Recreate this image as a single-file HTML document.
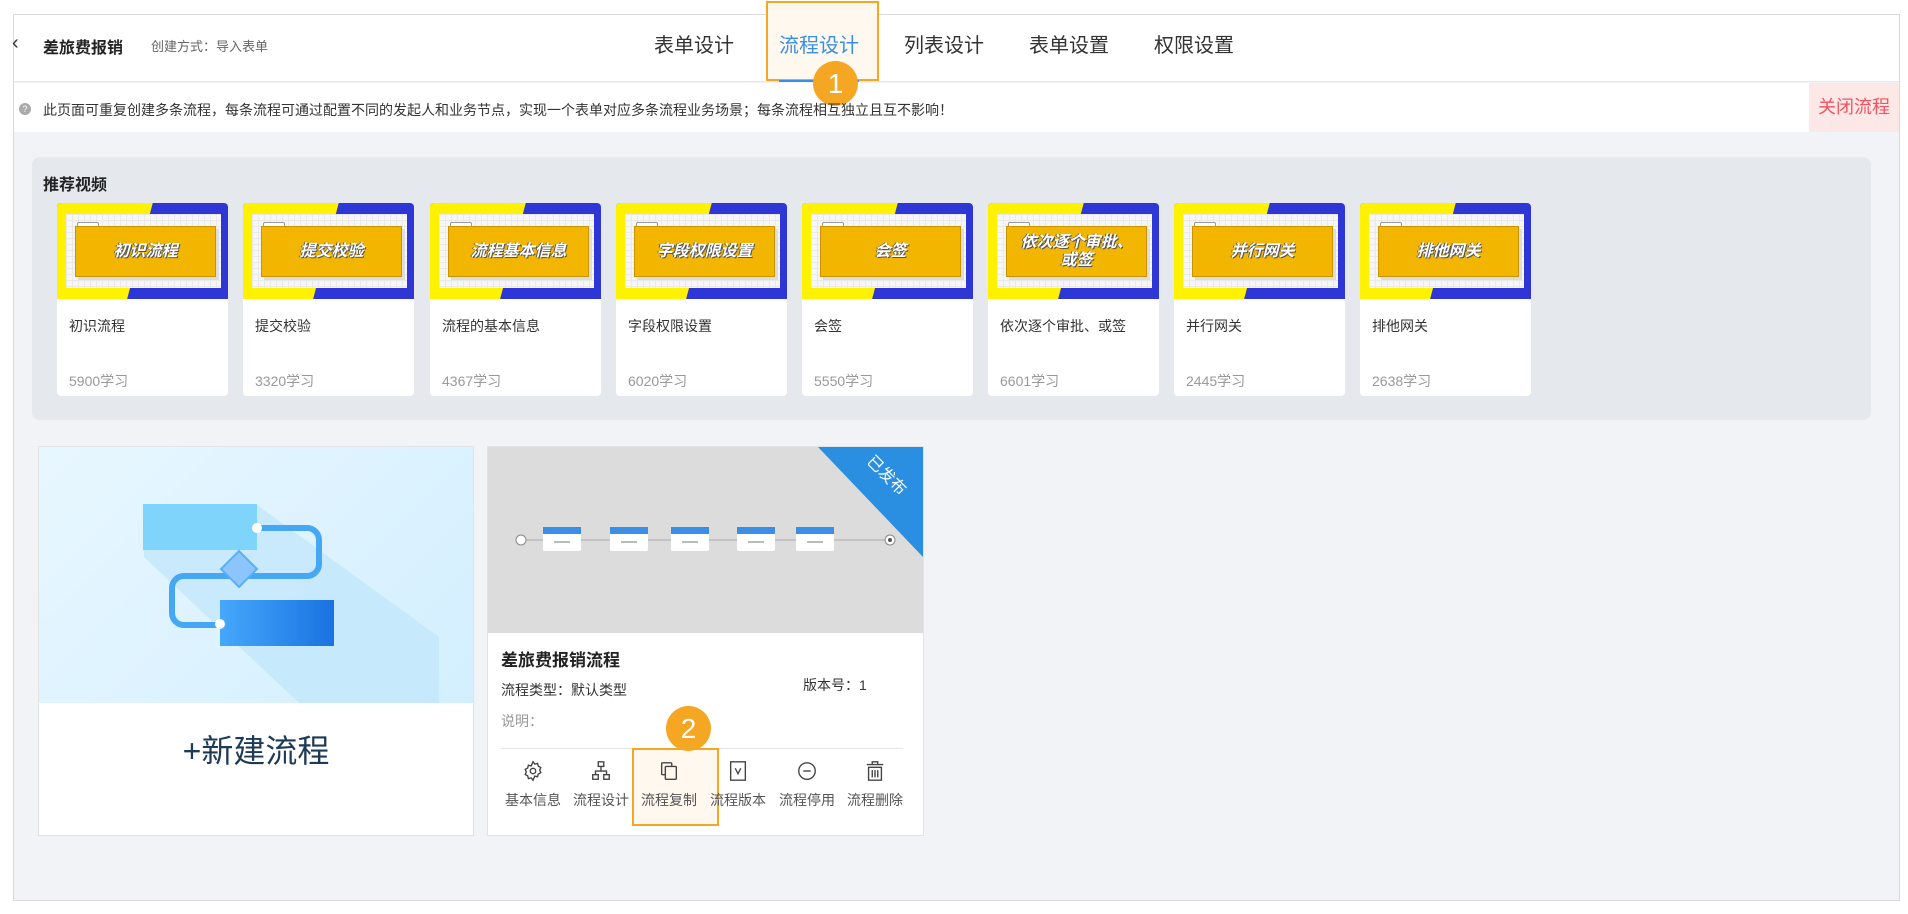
<!DOCTYPE html>
<html><head><meta charset="utf-8">
<style>
*{box-sizing:border-box;margin:0;padding:0}
body{width:1908px;height:914px;background:#fff;font-family:"Liberation Sans","Noto Sans CJK SC",sans-serif;position:relative;overflow:hidden;color:#333}
.abs{position:absolute}
.frame{left:13px;top:14px;width:1887px;height:887px;border:1px solid #d9d9d9;background:#f2f3f6}
.header{left:14px;top:15px;width:1885px;height:67px;background:#fff;border-bottom:1px solid #e8e8e8}
.notice{left:14px;top:83px;width:1885px;height:49px;background:#fff}
.tab{top:29px;font-size:20px;color:#333}
.vc{position:absolute;top:203px;width:171px;height:193px;background:#fff;border-radius:4px;overflow:hidden}
.th{position:relative;height:96px;background:#2f36d6;overflow:hidden}
.th .y{position:absolute;left:0;top:0;width:100%;height:100%;background:#fff200;clip-path:polygon(0 0,56% 0,41% 100%,0 100%)}
.th .w{position:absolute;left:9px;top:11px;right:7px;bottom:11px;background:#f6f6f6;background-image:linear-gradient(#e9e9e9 1px,transparent 1px),linear-gradient(90deg,#e9e9e9 1px,transparent 1px);background-size:6px 6px}
.th .o{position:absolute;left:18px;top:23px;right:12px;bottom:22px;background:#f2b600;border:1px solid #c99400;box-shadow:3px 3px 0 #ddd;display:flex;align-items:center;justify-content:center;color:#fff;font-weight:bold;font-style:italic;font-size:16px;text-shadow:1px 1px 0 #555,-1px 0 0 #555;text-align:center;line-height:18px}
.th .tg{position:absolute;left:20px;top:19px;width:22px;height:6px;background:#fff;border:1px solid #999;border-radius:2px}
.vt{position:absolute;left:12px;top:113px;font-size:14px;color:#333}
.vn{position:absolute;left:12px;top:168px;font-size:14px;color:#999}
.act{position:absolute;top:760px;width:68px;text-align:center;font-size:14px;color:#555}
.act svg{display:block;margin:0 auto 8px;width:22px;height:22px}
</style></head><body>
<div class="abs frame"></div>
<div class="abs header"></div>
<div class="abs" style="left:12px;top:32px;font-size:20px;color:#333">&#8249;</div>
<div class="abs" style="left:43px;top:34px;font-size:16px;font-weight:bold;color:#222">差旅费报销</div>
<div class="abs" style="left:151px;top:36px;font-size:13px;color:#666">创建方式：导入表单</div>
<div class="abs" style="left:766px;top:1px;width:113px;height:80px;background:#fff8ee;border:2px solid #f5a623"></div>
<div class="abs tab" style="left:654px">表单设计</div>
<div class="abs tab" style="left:779px;color:#3a8ee6">流程设计</div>
<div class="abs" style="left:779px;top:80px;width:80px;height:2px;background:#3a8ee6"></div>
<div class="abs tab" style="left:904px">列表设计</div>
<div class="abs tab" style="left:1029px">表单设置</div>
<div class="abs tab" style="left:1154px">权限设置</div>
<div class="abs notice"></div>
<div class="abs" style="left:813px;top:61px;width:45px;height:45px;border-radius:50%;background:#f5a623;color:#fff;font-size:28px;text-align:center;line-height:45px">1</div>
<div class="abs" style="left:19px;top:103px;width:12px;height:12px;border-radius:50%;background:#aaa;color:#fff;font-size:9px;text-align:center;line-height:12px">?</div>
<div class="abs" style="left:43px;top:100px;font-size:14px;color:#333">此页面可重复创建多条流程，每条流程可通过配置不同的发起人和业务节点，实现一个表单对应多条流程业务场景；每条流程相互独立且互不影响！</div>
<div class="abs" style="left:1809px;top:83px;width:90px;height:49px;background:#fde8e8;color:#f5515f;font-size:18px;line-height:49px;text-align:center">关闭流程</div>
<div class="abs" style="left:32px;top:157px;width:1839px;height:263px;background:#e5e8ec;border-radius:8px"></div>
<div class="abs" style="left:43px;top:171px;font-size:16px;font-weight:bold;color:#222">推荐视频</div>

<div class="vc" style="left:57px"><div class="th"><div class="y"></div><div class="w"></div><div class="tg"></div><div class="o">初识流程</div></div><div class="vt">初识流程</div><div class="vn">5900学习</div></div>
<div class="vc" style="left:243px"><div class="th"><div class="y"></div><div class="w"></div><div class="tg"></div><div class="o">提交校验</div></div><div class="vt">提交校验</div><div class="vn">3320学习</div></div>
<div class="vc" style="left:430px"><div class="th"><div class="y"></div><div class="w"></div><div class="tg"></div><div class="o">流程基本信息</div></div><div class="vt">流程的基本信息</div><div class="vn">4367学习</div></div>
<div class="vc" style="left:616px"><div class="th"><div class="y"></div><div class="w"></div><div class="tg"></div><div class="o">字段权限设置</div></div><div class="vt">字段权限设置</div><div class="vn">6020学习</div></div>
<div class="vc" style="left:802px"><div class="th"><div class="y"></div><div class="w"></div><div class="tg"></div><div class="o">会签</div></div><div class="vt">会签</div><div class="vn">5550学习</div></div>
<div class="vc" style="left:988px"><div class="th"><div class="y"></div><div class="w"></div><div class="tg"></div><div class="o">依次逐个审批、<br>或签</div></div><div class="vt">依次逐个审批、或签</div><div class="vn">6601学习</div></div>
<div class="vc" style="left:1174px"><div class="th"><div class="y"></div><div class="w"></div><div class="tg"></div><div class="o">并行网关</div></div><div class="vt">并行网关</div><div class="vn">2445学习</div></div>
<div class="vc" style="left:1360px"><div class="th"><div class="y"></div><div class="w"></div><div class="tg"></div><div class="o">排他网关</div></div><div class="vt">排他网关</div><div class="vn">2638学习</div></div>

<div class="abs" style="left:38px;top:446px;width:436px;height:390px;background:#fff;border:1px solid #e3e3e3"></div>
<div class="abs" style="left:39px;top:447px;width:434px;height:256px;background:linear-gradient(135deg,#e8f7ff,#d3efff)">
<svg width="434" height="256" viewBox="0 0 434 256">
<polygon points="105,58 218,58 400,190 400,256 260,256 105,110" fill="#bfe6fb" opacity=".7"/>
<rect x="104" y="57" width="114" height="46" fill="#7fd4fb"/>
<path d="M218 81 H268 a12 12 0 0 1 12 12 V117 a12 12 0 0 1 -12 12 H145 a12 12 0 0 0 -12 12 V166 a12 12 0 0 0 12 12 H182" fill="none" stroke="#46a8f5" stroke-width="6"/>
<polygon points="182,122 200,104 218,122 200,140" fill="#8cc4fb" stroke="#5aaef5" stroke-width="2"/>
<defs><linearGradient id="g" x1="0" x2="1"><stop offset="0" stop-color="#45a8fb"/><stop offset="1" stop-color="#1a72e0"/></linearGradient></defs>
<rect x="181" y="153" width="114" height="46" fill="url(#g)"/>
<circle cx="218" cy="81" r="5" fill="#fff"/><circle cx="181" cy="177" r="5" fill="#fff"/>
</svg></div>
<div class="abs" style="left:39px;top:726px;width:434px;text-align:center;font-size:32px;color:#1d3a57">+新建流程</div>

<div class="abs" style="left:487px;top:446px;width:437px;height:390px;background:#fff;border:1px solid #e3e3e3"></div>
<div class="abs" style="left:488px;top:447px;width:435px;height:186px;background:#dcdcdc;overflow:hidden">
<svg width="435" height="186" viewBox="0 0 435 186">
<line x1="33" y1="93" x2="402" y2="93" stroke="#aaa" stroke-width="1"/>
<circle cx="33" cy="93" r="5" fill="#fff" stroke="#888"/><circle cx="402" cy="93" r="5" fill="#fff" stroke="#888"/><circle cx="402" cy="93" r="2" fill="#555"/>
<g fill="#fff"><rect x="55" y="80" width="38" height="24" rx="2"/><rect x="122" y="80" width="38" height="24" rx="2"/><rect x="183" y="80" width="38" height="24" rx="2"/><rect x="249" y="80" width="38" height="24" rx="2"/><rect x="308" y="80" width="38" height="24" rx="2"/></g>
<g fill="#3a8ee6"><rect x="55" y="80" width="38" height="7"/><rect x="122" y="80" width="38" height="7"/><rect x="183" y="80" width="38" height="7"/><rect x="249" y="80" width="38" height="7"/><rect x="308" y="80" width="38" height="7"/></g>
<g fill="#bbb"><rect x="66" y="94" width="16" height="2"/><rect x="133" y="94" width="16" height="2"/><rect x="194" y="94" width="16" height="2"/><rect x="260" y="94" width="16" height="2"/><rect x="319" y="94" width="16" height="2"/></g>
<polygon points="330,0 435,0 435,110" fill="#2a8fe0"/>
<text x="395" y="32" transform="rotate(45 395 32)" font-size="16" fill="#fff" text-anchor="middle" font-family="Liberation Sans,Noto Sans CJK SC,sans-serif">已发布</text>
</svg></div>
<div class="abs" style="left:501px;top:646px;font-size:17px;font-weight:bold;color:#222">差旅费报销流程</div>
<div class="abs" style="left:501px;top:680px;font-size:14px;color:#333">流程类型：默认类型</div>
<div class="abs" style="left:803px;top:675px;font-size:14px;color:#333">版本号：1</div>
<div class="abs" style="left:501px;top:711px;font-size:14px;color:#999">说明：</div>
<div class="abs" style="left:501px;top:748px;width:402px;height:1px;background:#e5e5e5"></div>
<div class="abs" style="left:632px;top:748px;width:87px;height:78px;background:#fff8ee;border:2px solid #f5a623"></div>
<div class="abs" style="left:666px;top:706px;width:45px;height:45px;border-radius:50%;background:#f5a623;color:#fff;font-size:28px;text-align:center;line-height:45px">2</div>
<div class="act" style="left:499px"><svg viewBox="0 0 24 24" fill="none" stroke="#444" stroke-width="1.5"><circle cx="12" cy="12" r="3"/><path d="M12 2l2 2.5 3-.8.8 3 2.7 1.5-1.2 2.8 1.2 2.8-2.7 1.5-.8 3-3-.8L12 22l-2-2.5-3 .8-.8-3-2.7-1.5L4.7 13 3.5 10.2l2.7-1.5.8-3 3 .8z"/></svg>基本信息</div>
<div class="act" style="left:567px"><svg viewBox="0 0 24 24" fill="none" stroke="#444" stroke-width="1.5"><rect x="9" y="2" width="6" height="5"/><rect x="3" y="16" width="6" height="5"/><rect x="15" y="16" width="6" height="5"/><path d="M12 7v5M6 16v-4h12v4"/></svg>流程设计</div>
<div class="act" style="left:635px"><svg viewBox="0 0 24 24" fill="none" stroke="#444" stroke-width="1.5"><rect x="4" y="3" width="11" height="13" rx="1"/><rect x="8" y="7" width="12" height="14" rx="1" fill="#fff8ee"/></svg>流程复制</div>
<div class="act" style="left:704px"><svg viewBox="0 0 24 24" fill="none" stroke="#444" stroke-width="1.5"><rect x="4" y="2" width="16" height="20"/><path d="M9 9l3 6 3-6"/></svg>流程版本</div>
<div class="act" style="left:773px"><svg viewBox="0 0 24 24" fill="none" stroke="#444" stroke-width="1.5"><circle cx="12" cy="12" r="9"/><path d="M8 12h8"/></svg>流程停用</div>
<div class="act" style="left:841px"><svg viewBox="0 0 24 24" fill="none" stroke="#444" stroke-width="1.5"><path d="M3 5h18M9 5V2h6v3M5 8h14v14H5zM9 11v8M12 11v8M15 11v8"/></svg>流程删除</div>
</body></html>
